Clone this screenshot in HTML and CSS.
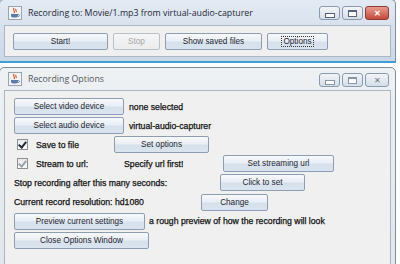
FILE: index.html
```
<!DOCTYPE html>
<html lang="en">
<head>
  <meta charset="UTF-8">
  <title>Recording Options</title>
  <link rel="stylesheet" href="styles.css">
</head>
<body>

  <!-- Main recorder window -->
  <div class="window active main-window">
    <div class="titlebar">
      <svg class="app-icon" width="14" height="14" viewBox="0 0 14 14">
        <rect x="0.5" y="0.5" width="13" height="13" fill="#f4f4f4" stroke="#9aa4b0"/>
        <path d="M6 2 C4 4 8 5 6 7 M8 3 C7 4 9 5 8 6" stroke="#e0552a" stroke-width="1.2" fill="none"/>
        <path d="M3 8 H10 V10 C10 12 3 12 3 10 Z" fill="#5a7dac"/>
        <path d="M10 8.5 C12 8.5 12 10.5 10 10.5" stroke="#5a7dac" fill="none"/>
      </svg>
      <span class="title">Recording to: Movie/1.mp3 from virtual-audio-capturer</span>
      <div class="controls">
        <span class="ctl"><span class="min"></span></span>
        <span class="ctl"><span class="max"></span></span>
        <span class="ctl close">&#x2715;</span>
      </div>
    </div>
    <div class="client main-client">
      <button class="btn w-start">Start!</button>
      <button class="btn w-stop" disabled>Stop</button>
      <button class="btn w-saved">Show saved files</button>
      <button class="btn w-options"><span class="focus">Options</span></button>
    </div>
  </div>

  <!-- Options window -->
  <div class="window options-window">
    <div class="titlebar">
      <svg class="app-icon" width="14" height="14" viewBox="0 0 14 14">
        <rect x="0.5" y="0.5" width="13" height="13" fill="#f4f4f4" stroke="#9aa4b0"/>
        <path d="M6 2 C4 4 8 5 6 7 M8 3 C7 4 9 5 8 6" stroke="#e0552a" stroke-width="1.2" fill="none"/>
        <path d="M3 8 H10 V10 C10 12 3 12 3 10 Z" fill="#5a7dac"/>
        <path d="M10 8.5 C12 8.5 12 10.5 10 10.5" stroke="#5a7dac" fill="none"/>
      </svg>
      <span class="title">Recording Options</span>
      <div class="controls">
        <span class="ctl"><span class="min"></span></span>
        <span class="ctl"><span class="max"></span></span>
        <span class="ctl close">&#x2715;</span>
      </div>
    </div>
    <div class="client options-client">
      <div class="row">
        <button class="btn w-device">Select video device</button>
        <span class="label">none selected</span>
      </div>
      <div class="row">
        <button class="btn w-device">Select audio device</button>
        <span class="label">virtual-audio-capturer</span>
      </div>
      <div class="row">
        <span class="check on"></span>
        <span class="label w-save">Save to file</span>
        <button class="btn w-setopt">Set options</button>
      </div>
      <div class="row">
        <span class="check on dim"></span>
        <span class="label w-stream">Stream to url:</span>
        <span class="label w-specify">Specify url first!</span>
        <button class="btn w-seturl">Set streaming url</button>
      </div>
      <div class="row">
        <span class="label w-stopafter">Stop recording after this many seconds:</span>
        <button class="btn w-click">Click to set</button>
      </div>
      <div class="row">
        <span class="label w-res">Current record resolution: hd1080</span>
        <button class="btn w-change">Change</button>
      </div>
      <div class="row">
        <button class="btn w-preview">Preview current settings</button>
        <span class="label w-rough">a rough preview of how the recording will look</span>
      </div>
      <div class="row">
        <button class="btn w-close">Close Options Window</button>
      </div>
    </div>
  </div>

</body>
</html>
```

FILE: styles.css
```
body {
  margin: 0;
  background-color: #ffffff;
  font-family: 'Liberation Sans', Arial, sans-serif;
  font-size: 9px;
  color: #1a1a1a;
  width: 400px;
  height: 264px;
  overflow: hidden;
}

.window {
  width: 387px;
  border: 1px solid #7f8c99;
  border-radius: 5px 5px 0 0;
  background: linear-gradient(#e7ecf2, #dde4ec);
  padding: 0 4px 4px 4px;
}

.main-window {
  margin-top: -1px;
  margin-left: -1px;
  border-bottom: 2px solid #3d9fd6;
  background: linear-gradient(#e3eaf3, #c9d7e7);
}

.options-window {
  margin-top: 4px;
  margin-left: -1px;
  background: linear-gradient(#eef1f4, #e2e6ea);
}

.titlebar {
  height: 25px;
  display: flex;
  align-items: center;
}

.options-window .titlebar {
  height: 22px;
}

.app-icon {
  margin: 0 6px 0 4px;
}

.title {
  font-family: 'Open Sans', sans-serif;
  font-size: 8.8px;
  color: #1e2a3a;
  flex: 1;
  white-space: nowrap;
}

.options-window .title {
  color: #505860;
}

.controls {
  display: flex;
  gap: 2px;
  margin-right: 2px;
  align-self: flex-start;
  margin-top: 6px;
}

.options-window .controls {
  margin-top: 5px;
}

.ctl {
  width: 21px;
  height: 14px;
  border: 1px solid #8a9bb0;
  border-radius: 3px;
  background: linear-gradient(#f2f5f9, #d4dde8);
  display: flex;
  align-items: center;
  justify-content: center;
  box-sizing: border-box;
  font-size: 8px;
  color: #6b7686;
}

.ctl.close {
  width: 24px;
}

.main-window .ctl.close {
  background: linear-gradient(#e89c8e, #c4493a);
  border-color: #8e3b30;
  color: #ffffff;
  font-weight: bold;
}

.min {
  width: 8px;
  height: 3px;
  border: 1px solid #56657a;
  margin-top: 4px;
  background: #ffffff;
}

.max {
  width: 7px;
  height: 4px;
  border: 1px solid #56657a;
  border-top-width: 2px;
  background: #ffffff;
}

.options-window .min,
.options-window .max {
  border-color: #8c96a3;
}

.client {
  background-color: #f0f0f0;
  border: 1px solid #a9b6c4;
}

.main-client {
  height: 30px;
  display: flex;
  align-items: center;
  padding-left: 8px;
  gap: 5px;
}

.options-client {
  height: 168px;
  padding: 6px 0 0 9px;
  display: flex;
  flex-direction: column;
}

.row {
  height: 19.1px;
  display: flex;
  align-items: center;
  white-space: nowrap;
}

.btn {
  height: 17px;
  border: 1px solid #8d9eb3;
  border-radius: 2px;
  background: linear-gradient(#f7f9fc 0%, #e9eff6 45%, #d6e1ec 55%, #d9e4f0 100%);
  font-family: 'Liberation Sans', Arial, sans-serif;
  font-size: 8.2px;
  color: #1e2530;
  padding: 0;
  margin: 0;
  white-space: nowrap;
}

.btn:disabled {
  border-color: #b8c0c8;
  background: linear-gradient(#f6f6f6, #ececec);
  color: #a5a5a5;
}

.focus {
  border: 1px dotted #333;
  padding: 0 1px;
}

.label {
  font-size: 8.7px;
  color: #111111;
  -webkit-text-stroke: 0.25px #111111;
  margin-left: 5px;
}

.check {
  width: 9px;
  height: 9px;
  border: 1px solid #8e8f8f;
  background: linear-gradient(#e8e8e8, #fbfbfb);
  margin-left: 3px;
  margin-right: 3px;
  position: relative;
}

.check.on::after {
  content: "";
  position: absolute;
  left: 2px;
  top: 0px;
  width: 3px;
  height: 6px;
  border: solid #1f2c3c;
  border-width: 0 2px 2px 0;
  transform: rotate(40deg);
}

.check.dim::after {
  border-color: #9aa3ad;
}

.w-start { width: 95px; }
.w-stop { width: 47px; }
.w-saved { width: 97px; }
.w-options { width: 61px; }

.w-device { width: 110px; }
.w-save { width: 78px; }
.w-setopt { width: 95px; }
.w-stream { width: 88px; }
.w-specify { width: 99px; margin-left: 0; }
.w-seturl { width: 111px; }
.w-stopafter { width: 206px; margin-left: 0; }
.w-click { width: 85px; }
.w-res { width: 187px; margin-left: 0; }
.w-change { width: 67px; }
.w-preview { width: 131px; }
.w-rough { margin-left: 4px; }
.w-close { width: 135px; }
```
